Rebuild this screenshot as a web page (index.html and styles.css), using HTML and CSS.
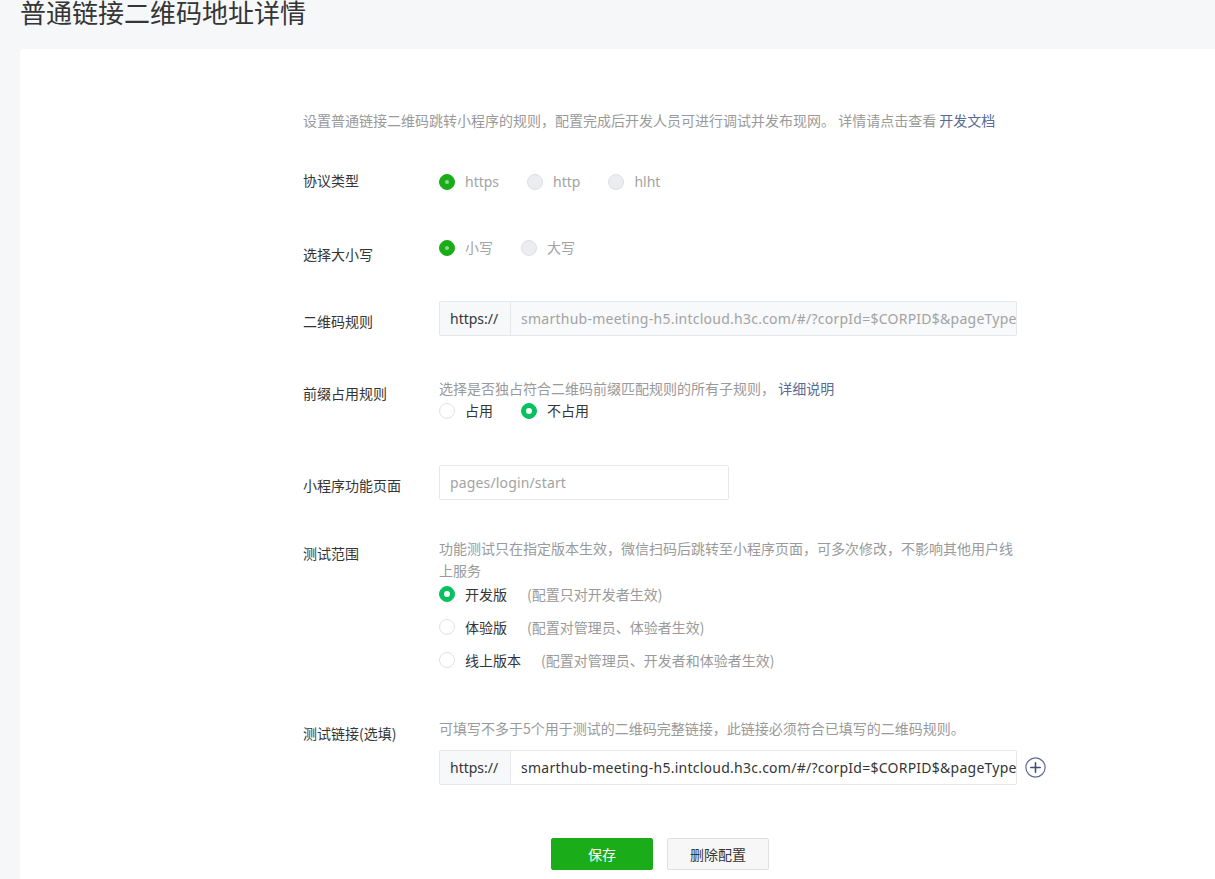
FILE: index.html
```html
<!DOCTYPE html>
<html lang="zh">
<head>
<meta charset="utf-8">
<title>普通链接二维码地址详情</title>
<link rel="stylesheet" href="styles.css">
</head>
<body>
<div class="page">
  <h1 class="title">普通链接二维码地址详情</h1>
  <div class="card">
    <p class="desc">设置普通链接二维码跳转小程序的规则，配置完成后开发人员可进行调试并发布现网。 详情请点击查看 <a class="link">开发文档</a></p>

    <div class="row row-protocol">
      <div class="label">协议类型</div>
      <div class="control radios">
        <span class="radio"><i class="dot dot-disabled-on"></i><span class="rtext muted">https</span></span>
        <span class="radio"><i class="dot dot-disabled"></i><span class="rtext muted">http</span></span>
        <span class="radio"><i class="dot dot-disabled"></i><span class="rtext muted">hlht</span></span>
      </div>
    </div>

    <div class="row row-case">
      <div class="label label-low">选择大小写</div>
      <div class="control radios">
        <span class="radio"><i class="dot dot-disabled-on"></i><span class="rtext muted">小写</span></span>
        <span class="radio"><i class="dot dot-disabled"></i><span class="rtext muted">大写</span></span>
      </div>
    </div>

    <div class="row row-qr">
      <div class="label label-input">二维码规则</div>
      <div class="control">
        <div class="url-input url-disabled">
          <span class="prefix">https://</span>
          <span class="url-text muted">smarthub-meeting-h5.intcloud.h3c.com/#/?corpId=$CORPID$&amp;pageType=</span>
        </div>
      </div>
    </div>

    <div class="row row-prefix">
      <div class="label label-hint">前缀占用规则</div>
      <div class="control">
        <p class="hint">选择是否独占符合二维码前缀匹配规则的所有子规则， <a class="link">详细说明</a></p>
        <div class="radios">
          <span class="radio"><i class="dot"></i><span class="rtext">占用</span></span>
          <span class="radio"><i class="dot dot-on"></i><span class="rtext">不占用</span></span>
        </div>
      </div>
    </div>

    <div class="row row-page">
      <div class="label label-input">小程序功能页面</div>
      <div class="control">
        <div class="text-input"><span class="muted">pages/login/start</span></div>
      </div>
    </div>

    <div class="row row-range">
      <div class="label label-hint">测试范围</div>
      <div class="control">
        <p class="hint hint-wrap">功能测试只在指定版本生效，微信扫码后跳转至小程序页面，可多次修改，不影响其他用户线上服务</p>
        <div class="radio-list">
          <span class="radio"><i class="dot dot-on"></i><span class="rtext">开发版</span><span class="note">(配置只对开发者生效)</span></span>
          <span class="radio"><i class="dot"></i><span class="rtext">体验版</span><span class="note">(配置对管理员、体验者生效)</span></span>
          <span class="radio"><i class="dot"></i><span class="rtext">线上版本</span><span class="note">(配置对管理员、开发者和体验者生效)</span></span>
        </div>
      </div>
    </div>

    <div class="row row-link">
      <div class="label label-hint">测试链接(选填)</div>
      <div class="control">
        <p class="hint">可填写不多于5个用于测试的二维码完整链接，此链接必须符合已填写的二维码规则。</p>
        <div class="link-line">
          <div class="url-input">
            <span class="prefix">https://</span>
            <span class="url-text">smarthub-meeting-h5.intcloud.h3c.com/#/?corpId=$CORPID$&amp;pageType=</span>
          </div>
          <svg class="add" width="21" height="21" viewBox="0 0 21 21" aria-hidden="true">
            <circle cx="10.5" cy="10.5" r="9.6" fill="none" stroke="#5b6b93" stroke-width="1.2"/>
            <path d="M10.5 5.8v9.4M5.8 10.5h9.4" stroke="#3f4f78" stroke-width="1.6" stroke-linecap="round"/>
          </svg>
        </div>
      </div>
    </div>

    <div class="actions">
      <button class="btn btn-primary">保存</button>
      <button class="btn btn-default">删除配置</button>
    </div>
  </div>
</div>
</body>
</html>
```

FILE: styles.css
```css
* { box-sizing: border-box; }
html, body { margin: 0; padding: 0; }
body {
  background: #f6f7f9;
  font-family: "Noto Sans", "Noto Sans CJK SC", sans-serif;
  font-size: 14px;
  color: #353535;
  overflow: hidden;
}
.page {
  width: 1215px;
  height: 879px;
  padding-left: 20px;
  overflow: hidden;
}
.title {
  margin: -3px 0 0 0;
  height: 52px;
  font-family: "Noto Sans CJK SC", sans-serif;
  font-size: 26px;
  font-weight: normal;
  line-height: 30px;
  color: #353535;
}
.card {
  background: #fff;
  border-radius: 4px 0 0 0;
  margin-right: -20px;
  height: 830px;
  padding: 60px 0 0 283px;
}
.desc, .hint {
  margin: 0;
  font-family: "Noto Sans CJK SC", sans-serif;
  font-size: 14px;
  line-height: 22px;
  color: #9a9a9a;
}
.link { color: #576b95; cursor: pointer; }
.row {
  display: grid;
  grid-template-columns: 136px 578px;
}
.label {
  font-family: "Noto Sans CJK SC", sans-serif;
  line-height: 22px;
  color: #353535;
}
.row-protocol { margin-top: 39px; }
.row-case { margin-top: 44px; }
.row-qr { margin-top: 36px; }
.row-prefix { margin-top: 41px; }
.row-page { margin-top: 43px; }
.row-range { margin-top: 37px; }
.row-link { margin-top: 46px; }
.row-protocol .label { margin-top: -1px; }
.label-low { padding-top: 6px; }
.label-input { padding-top: 9px; }
.label-hint { padding-top: 5px; }
.radios {
  display: flex;
  line-height: 22px;
}
.radios .radio { margin-right: 28px; }
.radio {
  display: inline-flex;
  align-items: center;
  height: 22px;
  font-family: "Noto Sans", "Noto Sans CJK SC", sans-serif;
}
.row-protocol .radios { margin-top: 1px; }
.row-prefix .radios { margin-top: 1px; }
.dot {
  width: 16px;
  height: 16px;
  border-radius: 50%;
  border: 1px solid #e2e2e2;
  background: #fff;
  margin-right: 10px;
  position: relative;
  flex: none;
}
.dot-disabled {
  background: #ebedf0;
  border-color: #dcdfe3;
}
.dot-disabled-on {
  background: #1aad19;
  border-color: #1aad19;
}
.dot-disabled-on::after {
  content: "";
  position: absolute;
  left: 5px;
  top: 5px;
  width: 4px;
  height: 4px;
  border-radius: 50%;
  background: #8fd68e;
}
.dot-on {
  background: #07c160;
  border-color: #07c160;
}
.dot-on::after {
  content: "";
  position: absolute;
  left: 4px;
  top: 4px;
  width: 6px;
  height: 6px;
  border-radius: 50%;
  background: #fff;
}
.rtext { color: #353535; }
.muted { color: #a3a3a3; }
.note {
  margin-left: 20px;
  color: #9a9a9a;
  font-family: "Noto Sans CJK SC", sans-serif;
}
.radio-list {
  display: flex;
  flex-direction: column;
  gap: 11px;
  margin-top: 2px;
}
.url-input {
  display: flex;
  width: 578px;
  height: 35px;
  border: 1px solid #e4e8eb;
  border-radius: 2px;
  overflow: hidden;
  background: #fff;
  white-space: nowrap;
}
.url-disabled { background: #f8f9fa; }
.prefix {
  flex: none;
  width: 71px;
  padding-left: 10px;
  line-height: 33px;
  background: #f6f8f9;
  border-right: 1px solid #e4e8eb;
  color: #353535;
}
.url-text {
  padding-left: 10px;
  line-height: 33px;
  overflow: hidden;
  letter-spacing: 0.25px;
  color: #353535;
}
.url-text.muted { color: #a3a3a3; }
.text-input {
  width: 290px;
  height: 35px;
  border: 1px solid #e4e8eb;
  border-radius: 2px;
  padding-left: 10px;
  line-height: 33px;
  letter-spacing: 0.15px;
}
.row-link .hint { margin-bottom: 11px; }
.link-line {
  display: flex;
  align-items: center;
  width: 640px;
}
.add { margin-left: 8px; flex: none; }
.row-link { grid-template-columns: 136px 640px; }
.actions {
  display: flex;
  gap: 14px;
  margin-top: 53px;
  padding-left: 248px;
}
.btn {
  width: 102px;
  height: 32px;
  border-radius: 2px;
  font-family: "Noto Sans CJK SC", sans-serif;
  font-size: 14px;
  cursor: pointer;
  padding: 0;
}
.btn-primary {
  background: #1aad19;
  border: 1px solid #1aad19;
  color: #fff;
}
.btn-default {
  background: #f7f7f7;
  border: 1px solid #e0e0e0;
  color: #353535;
}
```
